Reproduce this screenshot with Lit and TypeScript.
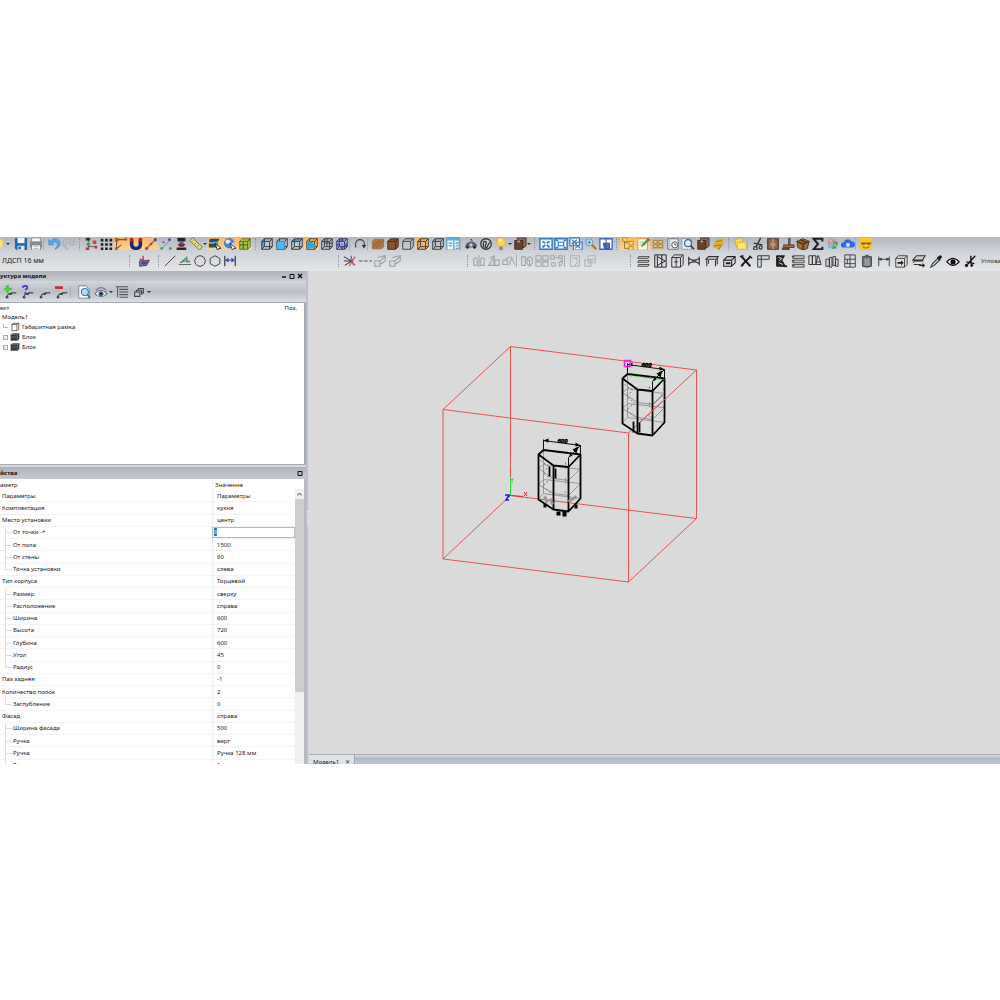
import { LitElement, html, svg, css, SVGTemplateResult } from "lit";
import { customElement, property, query } from "lit/decorators.js";
import { classMap } from "lit/directives/class-map.js";

/* Icon drawings, each on a 16 x 16 grid. */
const cubeEdges = svg`<path d="M2 5h9v9H2zM2 5l3-3h9v9l-3 3M11 5l3-3M5 2v9h9M5 11l-3 3" fill="none" stroke="#333b42" stroke-width="1.1"/>`;
const branch = svg`<path d="M3 14q1-4 4-4M8 9h6" fill="none" stroke="#444" stroke-width="1.3"/><path d="M2 13h3v2H2zM6 9h3v2H6z" fill="#333"/>`;
const brownBox = svg`<path d="M2 5l3-3h9v9l-3 3H2z" fill="#8a5431" stroke="#3d2717"/><path d="M2 5h9v9M11 5l3-3" fill="none" stroke="#3d2717"/>`;
const scissors = svg`<path d="M11 1L6 11M3 7l10 2" stroke="#333" stroke-width="1.6" fill="none"/><circle cx="5" cy="13" r="2" fill="none" stroke="#333" stroke-width="1.4"/><circle cx="11" cy="12" r="1.8" fill="none" stroke="#333" stroke-width="1.4"/>`;

const icons: Record<string, SVGTemplateResult> = {
  save: svg`<path d="M1 1h14v14H3l-2-2z" fill="#2468a8"/><path d="M4 1h8v6H4z" fill="#eef6fc"/><path d="M4 10h8v5H4z" fill="#dce9f3"/><path d="M5 11h3v3H5z" fill="#2468a8"/>`,
  print: svg`<path d="M3 1h10v5H3z" fill="#f7f7f7" stroke="#888"/><path d="M1 5h14v7H1z" fill="#888d92"/><path d="M3 9h10v6H3z" fill="#fff" stroke="#777"/><path d="M5 11h6M5 13h6" stroke="#aaa"/>`,
  undo: svg`<path d="M2 3v6h6L6 7q5-3 6 1 0 3-3 6 6-2 6-7-1-6-7-5-2 0-4 3z" fill="#58a7e8" stroke="#3381c4" stroke-width=".6"/>`,
  redo: svg`<path d="M14 3v6H8l2-2q-5-3-6 1 0 3 3 6-6-2-6-7 1-6 7-5 2 0 4 3z" fill="#bcc0c6" stroke="#9ba0a7" stroke-width=".6"/>`,
  axes: svg`<path d="M5 1v14M5 11h10" stroke="#555"/><path d="M2 1h5v3H2z" fill="#333"/><path d="M10 4h4v4h-4z" fill="#d04040"/><path d="M3 7h4v3H3z" fill="#3aa04a"/><path d="M2 12h4v3H2zM12 10h3v3h-3z" fill="#c0333f"/>`,
  dots: svg`<path d="M2 2h3v3H2zM7 2h3v3H7zM12 2h3v3h-3zM2 7h3v3H2zM7 7h3v3H7zM12 7h3v3h-3zM2 12h3v3H2zM7 12h3v3H7zM12 12h3v3h-3z" fill="#222"/>`,
  ortho: svg`<path d="M3 14V3h11M4 13l4-4" fill="none" stroke="#7b4e31" stroke-width="1.200"/><path d="M1 1h4v4H1zM12 1h3v3h-3zM1 12h3v3H1z" fill="#9b6339"/>`,
  magnet: svg`<path d="M3 3v5q0 5 5 5t5-5V3" fill="none" stroke="#1d2476" stroke-width="4"/><path d="M1 1h4v4H1zM11 1h4v4h-4z" fill="#c52224"/>`,
  segment: svg`<path d="M3 13L13 3" stroke="#a0542b" stroke-width="1.500"/><circle cx="3" cy="13" r="1.800" fill="#c43734"/><circle cx="13" cy="3" r="1.800" fill="#39479e"/><circle cx="8" cy="8" r="1.500" fill="#6b4b9e"/>`,
  points: svg`<path d="M4 13l8-9" stroke="#7a86ba"/><circle cx="3" cy="13" r="1.700" fill="#3ba45a"/><circle cx="12" cy="3" r="1.700" fill="#394bb0"/><circle cx="13" cy="13" r="1.700" fill="#3ba45a"/><circle cx="5" cy="6" r="1.200" fill="#5555aa"/>`,
  stamp: svg`<path d="M4 1h9v4H4z" fill="#222"/><path d="M6 5h5v3H6z" fill="#4c57c9"/><path d="M4 8h9l-2 3H6z" fill="#752d27"/><path d="M3 12h11v3H3z" fill="#282828"/>`,
  ruler: svg`<path d="M1 4l3-3 11 10-3 4z" fill="#e9de7c" stroke="#776f32"/><path d="M5 4L4 5M8 7L7 8M11 9l-1 2" stroke="#776f32"/>`,
  pick: svg`<path d="M2 2h11l-2 4H1zM1 7h10v5H1z" fill="#2d4b5d"/><path d="M2 7l10-1" stroke="#5bb3dd" stroke-width="2"/><path d="M8 7l7 6-3 .3-1 2.500z" fill="#fff" stroke="#222"/>`,
  globe: svg`<circle cx="7" cy="7" r="6" fill="#3e86d8"/><path d="M3 4q4-3 6 1L6 8 3 7zM9 8l4-2-1 5z" fill="#f3dccc"/><path d="M8 7l7 6-3 .3-1 2.500z" fill="#fff" stroke="#333344"/>`,
  gift: svg`<path d="M2 5h9v9H2zM5 2h9v9l-3 3M2 5l3-3" fill="#b8c542" stroke="#52631b"/><path d="M6 5v9M2 9h9M11 5l3-3" stroke="#2d7d2d" stroke-width="1.500"/>`,
  cubeLeft: svg`<path d="M2 5l3-3v9l-3 3z" fill="#46aee8"/>${cubeEdges}`,
  cubeFront: svg`${cubeEdges}<path d="M2 5h9v9H2z" fill="#46b9f2"/>`,
  cubeTop: svg`<path d="M2 5l3-3h9l-3 3z" fill="#46aee8"/>${cubeEdges}`,
  cubeCut: svg`${cubeEdges}<path d="M2 4l5 1 5 4v3l-10 2z" fill="#3f9fd8"/>`,
  cubeBack: svg`${cubeEdges}<path d="M8 2v9M5 7h9" stroke="#333"/>`,
  cubeMove: svg`${cubeEdges}<path d="M8 2v12M2 9h12M8 1L6 4h4zM8 15l-2-3h4zM1 9l3-2v4zM15 9l-3-2v4z" fill="#4049d8" stroke="#4049d8" stroke-width=".6"/>`,
  rotate: svg`<path d="M3 12V8a5 5 0 0 1 10 0v2" fill="none" stroke="#444" stroke-width="1.300"/><path d="M10 9h5l-2.500 4z" fill="#333"/>`,
  wood: svg`<path d="M1 5l3-3h11v9l-3 3H1z" fill="#aa7547"/><path d="M2 11l9-8M5 13l9-9" stroke="#8d5a31"/>`,
  woodBox: brownBox,
  cubeWire: svg`<path d="M2 5l3-3h9v9l-3 3H2zM2 5h9v9M11 5l3-3" fill="none" stroke="#444" stroke-width="1.100"/>`,
  cubeLine: svg`<path d="M2 5h9v9H2z" fill="#fbb063"/>${cubeEdges}`,
  cube: cubeEdges,
  windowIcon: svg`<path d="M1 1h14v14H1z" fill="#e8f5fd" stroke="#3a8cb5"/><path d="M1 1h14v3H1z" fill="#55b1da"/><path d="M9 4v11M3 7h4M3 10h4M11 7h3M11 10h3M11 13h3" stroke="#4899be" stroke-width="1.300"/>`,
  camera: svg`<path d="M1 12l2-5 4-2 5 1 3 3-1 3z" fill="#555b67"/><circle cx="8" cy="9" r="2" fill="#ccccdd"/><path d="M7 3l2-1 1 3z" fill="#303f83"/><circle cx="4" cy="12" r="1.500" fill="#222"/><circle cx="12" cy="12" r="1.500" fill="#222"/>`,
  noEntry: svg`<circle cx="8" cy="8" r="6" fill="#d4d7da" stroke="#333" stroke-width="1.500"/><path d="M5 12V7q0-2 2-2t1 3-1 4 2 0l3-6" fill="none" stroke="#333" stroke-width="1.500"/>`,
  bulb: svg`<circle cx="8" cy="6" r="5" fill="#ffd84f" stroke="#e3a936"/><path d="M6 11h4v4H6z" fill="#888"/><circle cx="7" cy="4" r="1.500" fill="#fff5bd"/>`,
  cases: svg`<path d="M5 1h10v9l-2 2H5z" fill="#8b654c" stroke="#49372c"/><path d="M2 4h9v10H2z" fill="#68422c" stroke="#372820"/><path d="M5 4h3v2H5z" fill="#bca293"/>`,
  fitAll: svg`<path d="M1 2h14v12H1z" fill="#eef7ff" stroke="#3979bc" stroke-width="1.600"/><path d="M4 5l3 2M12 5L9 7M4 12l3-3M12 12L9 9" stroke="#2478c7" stroke-width="2"/>`,
  fitWide: svg`<path d="M1 2h14v12H1z" fill="#eef7ff" stroke="#3979bc" stroke-width="1.600"/><path d="M5 6h6v4H5z" fill="#fff" stroke="#2c80c9" stroke-width="1.300"/><path d="M2 3l3 2M14 3l-3 2M2 13l3-2M14 13l-3-2" stroke="#2c80c9" stroke-width="1.500"/>`,
  fitPart: svg`<path d="M1 1h11v9H1zM5 6h10v9H5z" fill="#eef7ff" stroke="#3979bc" stroke-width="1.300"/><path d="M3 3l6 5M9 3L3 8M7 8l6 5M13 8l-6 5" stroke="#447fae" stroke-width="1.300"/>`,
  zoomIn: svg`<path d="M9 9l5 5" stroke="#ad7836" stroke-width="2.500"/><circle cx="6" cy="6" r="4" fill="#bce3fb" stroke="#5191c3"/><path d="M4 6h4M6 4v4" stroke="#3770b9"/>`,
  pan: svg`<path d="M1 2h14v12H1z" fill="#fff" stroke="#4367b0" stroke-width="1.500"/><path d="M8 2v9M5 7h7v6H6z" fill="#5570c0" stroke="#2e438c"/>`,
  tree: svg`<path d="M4 2v11h6M4 6h6" fill="none" stroke="#99681a"/><path d="M2 1h5v4H2zM9 5h5v4H9zM9 11h5v4H9z" fill="#ffe25d" stroke="#b1821e"/>`,
  note: svg`<path d="M2 2h11v13H2z" fill="#fff8dc" stroke="#bd9150"/><path d="M4 6h6M4 9h4" stroke="#9fb59f"/><path d="M6 12l1-4 6-6 2 2-6 6z" fill="#3da653"/><path d="M12 2l2-1 2 2-1 2z" fill="#ce3f3d"/>`,
  layout: svg`<path d="M1 2h14v12H1z" fill="#cbb071"/><path d="M3 4h4v3H3zM9 4h4v3H9zM3 9h4v3H3zM9 9h4v3H9z" fill="#ecd99e" stroke="#92783d"/>`,
  history: svg`<path d="M2 2h12v12H2z" fill="#e9edf0" stroke="#5c6b77"/><path d="M4 3v10" stroke="#7293b8" stroke-width="2" stroke-dasharray="1 1"/><circle cx="10" cy="9" r="3.500" fill="#fff" stroke="#444"/><path d="M10 7v2h2" fill="none" stroke="#333"/>`,
  search: svg`<path d="M1 2h11v12H1z" fill="#e9f0f7" stroke="#647f9b" stroke-dasharray="2 1"/><circle cx="8" cy="7" r="4" fill="#dcedf9" stroke="#3f5f80" stroke-width="1.300"/><path d="M11 10l4 4" stroke="#333" stroke-width="2"/>`,
  gold: svg`<path d="M2 11l4-8 9-2-2 9-5 4z" fill="#e0ae32"/><path d="M3 10l10-1M6 5l7-1" stroke="#a77716"/><path d="M8 13l5-3-4 5z" fill="#ba8318"/>`,
  notes: svg`<path d="M2 3l8-2 2 8-8 3z" fill="#f8dd59" stroke="#cda828"/><path d="M5 6h8l2 2v6H5z" fill="#ffe77b" stroke="#d8b233"/>`,
  scissors,
  cabinet: svg`<path d="M2 2h12v12H2z" fill="#94654e" stroke="#4e342a" stroke-width="1.400"/><path d="M8 2v12M6 7v3M10 7v3" stroke="#e0c2b2"/>`,
  brush: svg`<path d="M8 1h3v9H8z" fill="#665a54"/><path d="M3 9h12v3H3z" fill="#a16b4b" stroke="#553333"/><path d="M1 12h9v3H1z" fill="#6d4433"/>`,
  crate: svg`<path d="M1 5l7-3 7 3-2 8-5 2-6-3z" fill="#a26b35" stroke="#513415"/><path d="M1 5l7 3 7-3M8 8v7M5 3l6 3" fill="none" stroke="#402c1b" stroke-width="1.500"/>`,
  sigma: svg`<path d="M13 5V2H3l5 6-5 6h10v-3" fill="none" stroke="#222" stroke-width="2.300"/>`,
  report: svg`<path d="M3 1l6 2-1 5-6-1z" fill="#e28279"/><path d="M2 7h6v6H2z" fill="#86b8dc"/><path d="M9 4l5 2-2 7-5 1z" fill="#54a55b"/><path d="M9 8l4 4M4 3l3 3" stroke="#eee"/>`,
  cloud: svg`<path d="M3 12a3 3 0 0 1 0-6 5 5 0 0 1 9-1 3.500 3.500 0 0 1 1 7z" fill="#2f68e8"/><circle cx="8" cy="9" r="2.300" fill="#d9e6ff"/>`,
  smile: svg`<path d="M1 1h14v14H1z" fill="#ffc426"/><path d="M2 7h5M9 7h5M3 7q2 3 4 0 2 0 2 0 2 3 4 0M4 11q4 3 8 0" fill="none" stroke="#8f6611" stroke-width="1.200"/>`,

  plane: svg`<path d="M3 14V8l11-1-3 6z" fill="#7f83c5" stroke="#33346e"/><path d="M7 11V2M3 6l11 3" stroke="#c4344b" stroke-width="1.500"/><path d="M5 9h7l-2 3H5z" fill="#3f44a3"/>`,
  line: svg`<path d="M2 14L14 2" stroke="#444" stroke-width="1.100"/>`,
  trend: svg`<path d="M1 12h14M2 10l6-2h5" stroke="#555" fill="none"/><path d="M3 10l7-6v5h4" fill="none" stroke="#3f9b55" stroke-width="1.500"/>`,
  circle: svg`<circle cx="8" cy="8" r="6" fill="none" stroke="#444" stroke-width="1.100"/>`,
  hexagon: svg`<path d="M8 2l5.500 3v6L8 14l-5.500-3V5z" fill="none" stroke="#444" stroke-width="1.100"/>`,
  dimension: svg`<path d="M2 2v12M14 2v12" stroke="#333" stroke-width="1.300"/><path d="M3 7h10M3 7l3-2v4zM13 7l-3-2v4z" stroke="#3b4fb5" fill="#3b4fb5"/>`,
  trim: svg`<path d="M1 3l9 5H1M2 13l8-5" stroke="#444" fill="none" stroke-width="1.200"/><path d="M9 2l3 11" stroke="#4b59d0" stroke-width="1.300"/><path d="M14 3L7 14M9 8l5 5" stroke="#dd4455" stroke-width="1.200"/>`,
  dashes: svg`<path d="M1 8h15" stroke="#555" stroke-width="1.300" stroke-dasharray="4 2"/>`,
  extrude: svg`<path d="M2 8h6v6H2zM5 4l9-2v6l-6 4M8 8l6-5" fill="#ddd" stroke="#9b9ea3" stroke-width="1.200"/>`,
  mirror: svg`<path d="M8 1v14M2 13V5q4-2 4 2v6zM14 13V5q-4-2-4 2v6z" fill="none" stroke="#a2a5aa" stroke-width="1.200"/>`,
  ramp: svg`<path d="M2 13l6-10v10zM9 7h5v6H9zM3 5l5-3" fill="none" stroke="#a2a5aa" stroke-width="1.200"/>`,
  shapes: svg`<path d="M1 7h5v5H1zM8 13l3-9 4 9M4 6l5-3" fill="none" stroke="#a2a5aa" stroke-width="1.200"/>`,
  column: svg`<path d="M2 3h4v10H2zM8 5l3-2 3 2v6l-3 3-3-3zM8 5l3 3v5" fill="none" stroke="#a2a5aa" stroke-width="1.200"/>`,
  blocks: svg`<path d="M1 2h6v5H1zM9 2h6v5H9zM1 9h6v5H1zM9 9h6v5H9z" fill="none" stroke="#a2a5aa" stroke-width="1.200"/>`,
  scatter: svg`<path d="M1 2h4v4H1zM10 2h4v3h-4zM2 10h4v4H2zM10 10l4-3v4l-3 3zM6 4h3" fill="none" stroke="#a2a5aa" stroke-width="1.200"/>`,
  page: svg`<path d="M3 2h10v12H3zM6 5h4v3M8 13l3-4" fill="none" stroke="#b0b2b6" stroke-width="1.200"/>`,
  copy: svg`<path d="M2 7h7v7H2zM6 2h8v8H6zM8 5l4 3M12 5L8 8" fill="#ddd" stroke="#b0b2b5" stroke-width="1.200"/>`,
  rails: svg`<path d="M3 3h12l-1 2H2zM3 7.500h12l-1 2H2zM3 12h12l-1 2H2z" fill="#d7d8d9" stroke="#3b3b3b"/>`,
  panelCut: svg`<path d="M2 1h3v14H2zM5 1h10v14H5M5 3l9 5-9 5M10 1v14" fill="none" stroke="#222" stroke-width="1.100"/>`,
  cabinetWire: svg`<path d="M2 4h10v11H2zM2 4l3-3h10v11l-3 3M12 4l3-3M7 4v11M5 9h4" fill="none" stroke="#333" stroke-width="1.100"/>`,
  tie: svg`<path d="M2 3v10M14 3v10M2 5l4 2h4l4-2v6l-4-2H6l-4 2z" fill="none" stroke="#222" stroke-width="1.200"/>`,
  bench: svg`<path d="M1 6l3-3h11l-2 3zM2 6v8M4 7v4M12 7v7M14 4v8" fill="none" stroke="#333" stroke-width="1.200"/>`,
  drawer: svg`<path d="M2 7h9v7H2zM2 7l4-4h9v7l-4 4M11 7l4-4M5 10h4v1H5z" fill="none" stroke="#222" stroke-width="1.200"/>`,
  tools: svg`<path d="M3 3l10 11M13 3L3 13" stroke="#171717" stroke-width="2.200"/><path d="M1 3l4-1M12 2l3 3M2 14l3-1" stroke="#171717" stroke-width="1.500"/>`,
  corner: svg`<path d="M2 2h13v4H6v9H2zM2 6h4V2" fill="none" stroke="#333" stroke-width="1.100"/>`,
  hatch: svg`<path d="M3 2h9L9 7l4 7H3z" fill="#282828" stroke="#111"/><path d="M5 4l4 1-3 3M6 10l4 2" stroke="#eee" fill="none"/><path d="M11 14h4" stroke="#222" stroke-width="2"/>`,
  shelves: svg`<path d="M2 2h13v3H2zM2 7h13v3H2zM2 12h13v3H2z" fill="#c9cacc" stroke="#444"/><path d="M1 3h3M1 8h3M1 13h3" stroke="#333"/>`,
  rack: svg`<path d="M1 2h4v10H1zM5 2h4v10H5zM9 12l2-10h1l3 10zM10 9h4" fill="none" stroke="#333" stroke-width="1.100"/>`,
  boards: svg`<path d="M1 6h4v8H1zM5 4h3v11H5zM9 3h3v10H9zM12 6h3v8h-3z" fill="#cfd0d2" stroke="#333"/>`,
  grid: svg`<path d="M2 1h12v14H2zM8 1v14M2 6h12M2 11h12M5 6v5" fill="none" stroke="#444" stroke-width="1.100"/>`,
  basket: svg`<path d="M3 3h10v11q-5 2-10 0z" fill="#777b80" stroke="#333"/><path d="M6 1h4v3H6z" fill="#555"/><path d="M6 5v8M8 5v8M10 5v8" stroke="#b5b7ba"/>`,
  span: svg`<path d="M2 3v11M14 3v11M2 6h12M2 6l3-1v2zM14 6l-3-1v2z" stroke="#333" fill="#333"/>`,
  swap: svg`<path d="M2 5l3-3h10v10l-3 3H2zM2 5h10v10M12 5l3-3" fill="#ddd" stroke="#333"/><path d="M4 9h4V7l3 3-3 3v-2H4z" fill="#222"/>`,
  sheets: svg`<path d="M1 7l4-5h10l-3 5zM1 10l2-2h10M2 12h8" fill="#ccc" stroke="#333" stroke-width="1.200"/><path d="M8 13h6M12 11l2 2-2 2" stroke="#222" fill="none" stroke-width="1.400"/>`,
  dropper: svg`<path d="M2 15l2-4 6-6 2 2-6 6z" fill="#cdd0d2" stroke="#333" stroke-width="1.200"/><path d="M9 4l4-3 2 2-3 5z" fill="#1f1f1f"/>`,
  eye: svg`<path d="M1 9q7-8 14 0-7 8-14 0z" fill="#fff" stroke="#111" stroke-width="1.400"/><circle cx="8" cy="9" r="3" fill="#111"/>`,
  snip: svg`<path d="M14 2L5 12M9 2v9M4 9l9 2" stroke="#111" stroke-width="1.600"/><circle cx="4" cy="13" r="1.800" fill="#111"/><circle cx="10" cy="13" r="1.600" fill="#111"/>`,

  addNode: svg`${branch}<path d="M4 0v9M0 4.500h9" stroke="#4fc63f" stroke-width="3"/>`,
  askNode: svg`${branch}<path d="M2 3q0-2 3-2t2 3q-2 1-2 2M5 8v2" fill="none" stroke="#2b38d6" stroke-width="2"/>`,
  node: branch,
  cutNode: svg`${branch}<path d="M0 3h9" stroke="#cf2331" stroke-width="3"/>`,
  preview: svg`<path d="M2 1h8l4 4v10H2z" fill="#fff" stroke="#6d7d8c"/><circle cx="9" cy="8" r="4" fill="#b7ddf5" stroke="#3a7dae" stroke-width="1.300"/><path d="M12 11l3 4" stroke="#2f74aa" stroke-width="2"/>`,
  watch: svg`<path d="M1 10q7-8 14 0-7 7-14 0z" fill="#eef4f8" stroke="#666677" stroke-width="1.200"/><circle cx="8" cy="10" r="3" fill="#457998"/><circle cx="8" cy="10" r="1.400" fill="#112233"/><path d="M2 6q6-6 12 0" fill="none" stroke="#777788" stroke-width="1.300"/>`,
  list: svg`<path d="M1 2h14M5 5h10M5 8h10M5 11h10M5 14h10M3 2v12" fill="none" stroke="#555" stroke-width="1.200"/>`,
  stack: svg`<path d="M3 8h6v5H3zM5 6h6v5M7 4h6v5h-2M5 6v2M7 4v2" fill="none" stroke="#444" stroke-width="1.200"/>`,
  frame: svg`<path d="M3 4h8v10H3zM3 4l3-2h8v10l-3 2M11 4l3-2" fill="#fff" stroke="#444" stroke-width="1.200"/>`,
  block: svg`<path d="M1 4l4-2h10v9l-3 3H1z" fill="#3a3d3f"/><path d="M1 4h11v10M12 4l3-2M2 8h9" fill="none" stroke="#74787b"/>`,
};

const icon = (name: string) =>
  html`<svg class="icon" viewBox="0 0 16 16" aria-hidden="true">${icons[name]}</svg>`;

/* Tool strip notation: "|" separator, ":" grip, "v" drop-down, "*name" active tool. */
@customElement("tool-strip")
class ToolStrip extends LitElement {
  static styles = css`
    :host { display: flex; align-items: center; flex: none; }
    :host([spread]) { width: 345px; }
    button {
      flex: 0 0 15px; height: 14px; padding: 0; border: 0; background: none;
      display: flex; align-items: center; justify-content: center;
    }
    :host([spread]) button { flex: 1 1 0; min-width: 0; }
    :host([roomy]) button { flex-basis: 17px; }
    :host([wide]) button { flex-basis: 22px; }
    button.on { background: linear-gradient(#f7b565, #ffd693); }
    .icon { width: 14px; height: 14px; display: block; flex: none; }
    .sep { flex: 0 0 3px; height: 12px; box-sizing: border-box; border-left: 1px solid #a9adb4; }
    :host([roomy]) .sep { flex-basis: 5px; }
    .grip { flex: 0 0 7px; height: 12px; display: flex; justify-content: center; }
    .grip::before { content: ""; border-left: 1px dotted #8d929a; }
    :host button.drop { flex: 0 0 4px; }
    .drop::before { content: ""; border: 2px solid transparent; border-top-color: #333; border-bottom: 0; }
  `;
  @property() tools = "";

  render() {
    return this.tools.split(" ").map((t) => {
      if (t === "|") return html`<span class="sep"></span>`;
      if (t === ":") return html`<span class="grip"></span>`;
      if (t === "v") return html`<button class="drop" aria-label="Ещё"></button>`;
      const on = t.startsWith("*");
      const name = on ? t.slice(1) : t;
      return html`<button class=${classMap({ on })} aria-label=${name}>${icon(name)}</button>`;
    });
  }
}

/* A cabinet with a bevelled corner, drawn from its top left front edge. */
const cabinetBody = svg`
  <path class="faint" d="M5-4v43M5 39l37 5M5 39l-5 5M5 10l-5 4 15 10 15 2 12-12M5 25l-5 5 15 9 15 2 12-12M5 10l37 5M5 25l37 4"/>
  <path class="faint dash" d="M2 6l8 6-6 6 8 6-8 8 8 6M27 8v6M27 24v5M26 37l4 3"/>
  <path class="thick" d="M0 0l5-4.500 37 4.500-12 12.500-15-1.500zM0 0v45l15 10 15 2V12.500M15 11v44M42 0v44L30 57"/>
  <path class="thin" d="M5-14l37 5M5-15v11M42-9v9M42-9L30 3v9"/>
  <path class="arrow" d="M5-14l5-2v4zM42-9l-5-3v4zM40-8l-6 3 4 4zM30 3l2-4 2 2z"/>
  <text class="size" x="19" y="-12">600</text>`;

@customElement("model-view")
class ModelView extends LitElement {
  static styles = css`
    :host { display: block; min-height: 0; overflow: hidden; background: #dadada; }
    svg { display: block; width: 100%; height: 100%; }
    .room { fill: none; stroke: #e65353; stroke-width: 1; }
    .thick { fill: none; stroke: #050505; stroke-width: 1.8; stroke-linejoin: round; }
    .thin { fill: none; stroke: #111; stroke-width: 1; }
    .faint { fill: none; stroke: #999; stroke-width: 1; }
    .heavy { stroke-width: 3; }
    .dash { stroke: #777; stroke-dasharray: 2 2; }
    .arrow { fill: #050505; }
    .size { font: italic bold 6px "Liberation Sans", sans-serif; fill: #000; stroke: #000; stroke-width: .5; }
    .green { fill: none; stroke: #28dd28; stroke-width: 1; }
    .mark { fill: none; stroke: #ee22dd; stroke-width: 1.5; }
    .red { fill: none; stroke: #e03030; }
    .blue { fill: none; stroke: #2020e8; stroke-width: 1.5; }
  `;
  render() {
    return html`<svg viewBox="309 271 691 483" role="img" aria-label="Модель1">
      <path class="room" d="M510.500 346.500L696.500 370v148.500L510.500 495.500zM443 409.500L628.500 433v149L443 559zM510.500 346.500L443 409.500M696.500 370L628.500 433M696.500 518.500L628.500 582M510.500 495.500L443 559"/>
      <path class="green" d="M510.500 495V478M510 478l2 2 2-2M512 480v3"/>
      <path class="red" d="M511 495.500l12 1M524 492l3 4M527 492l-3 4"/>
      <path class="blue" d="M505 495h4l-3 5h3M510 495l-2 2"/>
      <g transform="translate(622.500 378.500)">${cabinetBody}
        <path class="green" stroke-dasharray="6 3" d="M41 3v38"/>
        <path class="green" d="M31 26l10-10M31 40l10-10"/>
        <path class="green" stroke-dasharray="4 3" d="M6-3l36 4"/>
        <path class="thick" d="M11 43v11M17 44v10"/>
      </g>
      <path class="room" d="M640 422l25-23"/>
      <path class="mark" d="M624.500 360.500h6v6h-6z"/>
      <g transform="translate(538.500 454.500)">${cabinetBody}
        <path class="thick" d="M11 12v10M17 14v10"/>
        <path d="M5 49h3v4H5zM18 57h4v4h-4zM24 57h4v5h-4zM36 50h3v4h-3z"/>
        <path class="faint heavy" d="M6 42l3 6M12 44l2 6M30 47l8-5"/>
      </g>
    </svg>`;
  }
}

type Row = [label: string, value: string, level?: number, last?: boolean];

const rows: Row[] = [
  ["Параметры", "Параметры"],
  ["Комплектация", "кухня"],
  ["Место установки", "центр"],
  ["От точки -+", "0", 1],
  ["От пола", "1500", 1],
  ["От стены", "60", 1],
  ["Точка установки", "слева", 1, true],
  ["Тип корпуса", "Торцевой"],
  ["Размер", "сверху", 1],
  ["Расположение", "справа", 1],
  ["Ширина", "600", 1],
  ["Высота", "720", 1],
  ["Глубина", "600", 1],
  ["Угол", "45", 1],
  ["Радиус", "0", 1, true],
  ["Паз задняя", "-1"],
  ["Количество полок", "2"],
  ["Заглубление", "0", 1, true],
  ["Фасад", "справа"],
  ["Ширина фасада", "500", 1],
  ["Ручка", "верт", 1],
  ["Ручка", "Ручка 128 мм", 1],
  ["Тип", "1", 1],
];

@customElement("property-grid")
class PropertyGrid extends LitElement {
  static styles = css`
    :host { display: grid; grid-template-columns: minmax(0, 1fr) 9px; min-height: 0; overflow: hidden; background: #fff; }
    table { width: 100%; height: 293px; border-collapse: separate; border-spacing: 0; table-layout: fixed; line-height: 8px; }
    .name { width: 212px; }
    th, td { box-sizing: border-box; height: 12px; }
    th { height: 11px; padding: 0 0 0 2px; font-weight: normal; text-align: left; }
    th:first-child { padding-left: 0; }
    td { padding: 0 0 0 4px; border-bottom: 1px solid #f3f3f4; white-space: nowrap; }
    td + td, th + th { border-left: 1px solid #ececee; }
    td:first-child { padding-left: 2px; }
    td.child { padding-left: 13px; position: relative; }
    .child::before { content: ""; position: absolute; left: 5px; top: 0; bottom: -1px; border-left: 1px solid #dcdcdc; }
    .child.last::before { bottom: 50%; }
    .child::after { content: ""; position: absolute; left: 5px; top: 50%; width: 7px; border-top: 1px solid #dcdcdc; }
    td.edit { padding: 0; border-left: 0; }
    input {
      display: block; box-sizing: border-box; width: 100%; height: 11px; padding: 0 1px; margin: 0;
      border: 1px solid #b4bcc2; outline: 0; background: #fff; color: #222; font: inherit; line-height: 8px;
    }
    input::selection { background: #1979ca; color: #fff; }
    .bar { display: flex; flex-direction: column; background: #f0f0f0; margin-top: 10px; }
    .bar button { height: 10px; padding: 0; border: 0; background: none; display: grid; place-items: center; }
    .bar svg { width: 5px; height: 4px; }
    .thumb { flex: 0 0 193px; background: #cdcdcd; }
    .space { flex: 1; }
  `;
  @query("input") field!: HTMLInputElement;

  firstUpdated() {
    this.field.focus();
    this.field.select();
  }

  render() {
    return html`
      <table>
        <thead><tr><th class="name">аметр</th><th>Значение</th></tr></thead>
        <tbody>
          ${rows.map(([label, value, level, last], i) => html`<tr>
            <td class=${classMap({ child: !!level, last: !!last })}>${i === 3 ? html`<label for="from">${label}</label>` : label}</td>
            ${i === 3 ? html`<td class="edit"><input id="from" .value=${value}></td>` : html`<td>${value}</td>`}
          </tr>`)}
        </tbody>
      </table>
      <div class="bar">
        <button aria-label="Вверх"><svg viewBox="0 0 5 4"><path d="M0 3.500L2.500 1 5 3.500" fill="none" stroke="#444"/></svg></button>
        <div class="thumb"></div>
        <div class="space"></div>
        <button aria-label="Вниз"><svg viewBox="0 0 5 4"><path d="M0 .5L2.500 3 5 .5" fill="none" stroke="#444"/></svg></button>
      </div>`;
  }
}

@customElement("app-root")
class AppRoot extends LitElement {
  static styles = css`
    :host {
      display: grid; grid-template-rows: 237px minmax(0, 1fr) 236px; height: 100vh; background: #fff;
      font: 6px/8px "Noto Sans", "Liberation Sans", sans-serif; color: #222;
    }
    .app {
      grid-row: 2; display: grid; grid-template-rows: 34px minmax(0, 1fr);
      grid-template-columns: minmax(0, 1fr); overflow: hidden; background: #dadada;
    }
    .ribbon { background: linear-gradient(#b3b7bf, #d0d3d8 45%, #e5e6e7); display: grid; grid-template-rows: 13px 21px; }
    .line { display: flex; min-width: 0; overflow: hidden; }
    .open { flex: 0 0 5px; width: 5px; height: 12px; padding: 0; border: 0; background: linear-gradient(90deg, #ffe77c, #f0cb42); clip-path: polygon(0 20%, 70% 20%, 40% 90%, 0 90%); }
    .more { width: 8px; padding-left: 1px; box-sizing: border-box; }
    .tools { display: grid; grid-template-columns: 126px 209px 129px 163px minmax(0, 1fr); align-items: center; overflow: hidden; }
    .tools > div { display: flex; align-items: center; min-width: 0; }
    select { appearance: none; border: 0; background: none; padding: 0 0 0 2px; margin: 0; color: #222; font: 7px/10px "Noto Sans", sans-serif; width: 100%; }
    .tail { padding-left: 2px; color: #333; white-space: nowrap; }
    .work { display: grid; grid-template-columns: 306px 3px minmax(0, 1fr); min-height: 0; }
    .side { display: grid; grid-template-rows: 10px 21px 163px 2px 12px minmax(0, 1fr); min-height: 0; background: #d5d8dd; }
    .title { display: flex; align-items: center; padding-right: 2px; background: linear-gradient(#aeb3bb, #c6cad0); font-weight: bold; color: #111; }
    h2 { margin: 0; flex: 1; font-size: 6px; line-height: 8px; }
    .title button { flex: 0 0 8px; height: 8px; padding: 0; border: 0; background: none; display: grid; place-items: center; }
    .title svg { width: 6px; height: 6px; }
    .actions { display: flex; align-items: center; background: linear-gradient(#d3d6db, #b9bec8 50%, #dcdee2); padding-left: 2px; }
    .tree { background: #fff; border: 1px solid #a6abb1; border-width: 1px 2px 1px 0; overflow: hidden; }
    .head { display: flex; justify-content: space-between; height: 9px; align-items: center; padding-right: 7px; }
    ul { list-style: none; margin: 0; padding: 0; }
    li { display: flex; align-items: center; height: 10px; gap: 2px; padding-left: 3px; }
    li.root { padding-left: 2px; }
    li .icon { width: 10px; height: 10px; }
    .knob { width: 3px; height: 3px; border: 1px solid #aaa; background: #eee; }
    .knob.leaf { border-width: 0 0 1px 1px; border-color: #bbb; background: none; width: 4px; margin-bottom: 3px; }
    .split { background: #bcc1c9; border-right: 1px solid #d5d8dc; display: flex; justify-content: center; align-items: center; }
    .split::before { content: ""; height: 14px; border-left: 1px dotted #eef0f2; }
    property-grid { border-right: 2px solid #b5b9bf; }
    .stage { display: grid; grid-template-rows: minmax(0, 1fr) 10px; min-height: 0; min-width: 0; }
    .tabs { display: flex; background: linear-gradient(#d9dde2, #afb9c4 40%, #c3cad2); border-top: 1px solid #a8adb3; overflow: hidden; }
    .tab { display: flex; gap: 6px; flex: none; padding: 3px 4px 0; background: #dfe2e6; border-right: 1px solid #9fa6ae; }
    .tab a { color: #222; text-decoration: none; }
    .tab button { padding: 0; border: 0; background: none; font: inherit; color: #333; }
  `;

  render() {
    return html`
      <main class="app">
        <header class="ribbon">
          <div class="line">
            <button class="open" aria-label="Открыть"></button>
            <tool-strip class="more" tools="v"></tool-strip>
            <tool-strip tools="save print | undo redo : axes dots *ortho *magnet *segment points stamp ruler v *pick *globe *gift : cubeLeft cubeFront cubeTop *cubeCut cubeBack cubeMove | rotate | wood woodBox cubeWire *cubeLine cube windowIcon | camera noEntry bulb v cases v : fitAll fitWide fitPart zoomIn pan : *tree *note layout history search cases gold : notes | scissors cabinet brush crate sigma report cloud | smile"></tool-strip>
          </div>
          <div class="tools">
            <select aria-label="Материал"><option>ЛДСП 16 мм</option></select>
            <div><tool-strip tools=":"></tool-strip><tool-strip wide tools="plane"></tool-strip><tool-strip tools=": line trend circle hexagon dimension"></tool-strip></div>
            <div><tool-strip tools=": trim dashes extrude extrude"></tool-strip></div>
            <div><tool-strip tools=": mirror ramp shapes | column blocks scatter | page copy"></tool-strip></div>
            <div>
              <tool-strip tools=":"></tool-strip>
              <tool-strip spread tools="rails panelCut cabinetWire tie bench drawer tools corner hatch shelves rack boards grid basket span swap sheets dropper eye snip"></tool-strip>
              <span class="tail">Углова</span>
            </div>
          </div>
        </header>
        <div class="work">
          <aside class="side">
            <div class="title">
              <h2>уктура модели</h2>
              <button aria-label="Свернуть"><svg viewBox="0 0 6 6"><path d="M1 4h4" stroke="#111" stroke-width="1.500"/></svg></button>
              <button aria-label="Развернуть"><svg viewBox="0 0 6 6"><path d="M1 1.500h4v4H1z" fill="none" stroke="#111"/></svg></button>
              <button aria-label="Закрыть"><svg viewBox="0 0 6 6"><path d="M1 1l4 4M5 1L1 5" stroke="#111" stroke-width="1.500"/></svg></button>
            </div>
            <div class="actions">
              <tool-strip roomy tools="addNode askNode node cutNode | preview watch v list stack v"></tool-strip>
            </div>
            <div class="tree">
              <div class="head"><span>ект</span><span>Поз.</span></div>
              <ul>
                <li class="root">Модель1</li>
                <li><i class="knob leaf"></i>${icon("frame")}Габаритная рамка</li>
                ${[1, 2].map(() => html`<li><i class="knob"></i>${icon("block")}Блок</li>`)}
              </ul>
            </div>
            <span></span>
            <div class="title">
              <h2>йства</h2>
              <button aria-label="Развернуть"><svg viewBox="0 0 6 6"><path d="M1 1.500h4v4H1z" fill="none" stroke="#111"/></svg></button>
            </div>
            <property-grid></property-grid>
          </aside>
          <div class="split"></div>
          <section class="stage">
            <model-view></model-view>
            <nav class="tabs">
              <div class="tab"><a href="#model">Модель1</a><button aria-label="Закрыть вкладку">✕</button></div>
            </nav>
          </section>
        </div>
      </main>`;
  }
}
